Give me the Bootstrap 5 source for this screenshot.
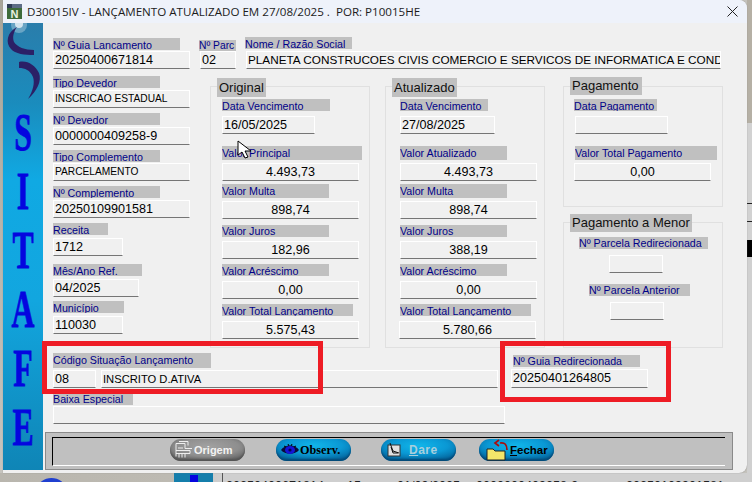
<!DOCTYPE html>
<html lang="pt-BR">
<head>
<meta charset="utf-8">
<title>D30015IV</title>
<link href="https://cdn.jsdelivr.net/npm/bootstrap@5.3.0/dist/css/bootstrap.min.css" rel="stylesheet">
<style>
html,body{margin:0;height:482px;width:752px;overflow:hidden;background:#c4c2bc;font-family:"Liberation Sans",Arial,sans-serif;color:#000}
.tira-e{width:3px;height:473px;background:linear-gradient(#a9a69a,#c6c4be)}
.tira-d{width:5px;height:473px;background:linear-gradient(#b5b0a5 0,#b5b0a5 123px,#d2d2d2 123px,#d2d2d2 203px,#222 203px,#222 204px,#d2d2d2 204px,#d2d2d2 221px,#222 221px,#222 222px,#d2d2d2 222px,#d2d2d2 240px,#000 240px,#000 257px,#d0d0d0 257px)}
.janela{width:744px;height:473px;background:#f0f0f0;border-radius:0 8px 8px 0;box-shadow:0 0 1px #777;position:relative;overflow:hidden}
.titulo{height:23px;background:#eef2fa;padding-left:4px;font:11.6px/23px "Open Sans",sans-serif;color:#1c1c1c;white-space:pre}
.ico-n{width:15px;height:15px;margin-right:5px;flex:none}
.fecha-x{margin-left:auto;margin-right:9px;width:11px;height:11px}
.corpo{height:447px}
.lateral{width:40px;height:447px;flex:none;background:linear-gradient(#2a7dab 0,#1a8cbd 18%,#10a9e3 35%,#12a6df 62%,#0f85b6 100%);overflow:hidden}
.lateral svg{display:block}
.letra{height:59px;text-align:center;font:bold 53px/59px "Liberation Serif",serif;color:#0505df;transform:scaleX(.6);-webkit-text-stroke:.8px #0505df}
.area{width:704px;padding-left:10px}
.linha1{padding-top:14px;height:46px}
.rot{display:block;background:#c0c0c0;color:#000088;font-size:10.7px;line-height:14px;height:12px;white-space:nowrap;overflow:hidden}
.cx{display:block;height:18px;background:#f0f0f0;border:1px solid #fff;border-bottom:1px solid #757575;font-size:12.6px;line-height:16px;padding-left:1px;white-space:nowrap;overflow:hidden}
.cx.vl{text-align:center;padding-left:0}
.menor{font-size:10.2px}
.medio{font-size:11.2px}
.a14 .rot{height:14px;line-height:14px}
.a15 .rot{height:15px;line-height:15px}
.v1 .rot{margin-bottom:1px}
.v2 .rot{margin-bottom:2px}
.v3 .rot{margin-bottom:3px}
.v4 .rot{margin-bottom:4px;line-height:12px}
.v5 .rot{margin-bottom:5px}
.t2{margin-top:2px}.t3{margin-top:3px}.t4{margin-top:4px}.t5{margin-top:5px}.t6{margin-top:6px}.t7{margin-top:7px}.t8{margin-top:8px}.t11{margin-top:11px}.t12{margin-top:12px}
.f-guia{width:137px}
.f-guia .rot{width:127px;margin:1px 0}
.f-parc{width:37px;margin-left:9px}
.f-parc .rot{margin-top:3px;height:11px;line-height:11px;font-size:10.3px}
.f-parc .cx{margin-left:1px;width:36px}
.f-nome{width:476px;margin-left:9px}
.f-nome .rot{width:107px;margin-bottom:2px}
.f-nome .cx{margin-left:1px;width:475px;font-size:11.75px;padding:0 1px}
.col-esq{width:157px;flex:none;margin-top:-10px}
.l137{width:137px}.l70{width:70px}.l86{width:86px}
.r55{width:55px}.r89{width:89px}.r71{width:71px}
.linha2{height:279px;padding-top:17px}
.grupo{border:1px solid #e0e0e0;width:160px;height:262px;padding-left:11px}
.g-atu{margin-left:15px;padding-left:14px}
.coluna3{margin-left:18px}
.legenda{display:block;width:fit-content;background:#c0c0c0;font-size:13px;line-height:19px;height:19px;margin:-9px 0 0 -5px;padding:0 2px;color:#111;white-space:nowrap}
.g-atu .legenda{margin-left:-8px}
.g-pag{height:121px;padding-left:10px}
.g-pag .legenda{height:18px;line-height:18px;margin:-10px 0 0 -4px;padding-right:3px}
.g-men{height:126px;margin-top:15px;padding-left:0}
.g-men .legenda{height:18px;line-height:18px;margin-left:6px}
.lb108{width:108px}.lb140{width:140px}.lb107{width:107px}.lb131{width:131px}
.lb88{width:88px}.lb83{width:83px}.lb142{width:142px}.lb158{width:158px}.lb80{width:80px}
.cx93{width:93px}.cx137{width:137px}.cx95{width:95px}
.la1{margin-left:15px;width:129px;line-height:12px}
.la2{margin-left:25px;width:101px;line-height:12px}
.bx54{width:54px;margin-left:45px}.bx54b{width:54px;margin-left:46px}
.desloca-1{margin-left:-1px}.desloca1{margin-left:1px}
.linha3{height:76px}
.sit{width:445px;padding-top:5px}
.c43{width:43px;flex:none}.cresto{width:397px;margin-left:5px}
.guia{margin-left:13px;padding-top:7px}
.guia .rot{width:127px;margin:0 0 2px 2px;line-height:12px}
.guia .cx{height:19px}
.baixa{width:452px;margin-top:5px}
.baixa .rot{width:80px;height:12px;line-height:12px;margin-bottom:1px}
.painel{width:688px;height:38px;margin:8px 0 0 -8px;background:#c0c0c0;border:1px solid #8a8a8a;padding:4px 7px 3px 6px}
.painel-in{height:29px;border-top:1px solid #000;border-left:1px solid #000;border-bottom:1px solid #fff;padding-top:1px}
.bt{width:75px;height:22px;border-radius:11px;border:0;padding:0 0 0 3px;display:flex;align-items:center;font-weight:bold;background:radial-gradient(ellipse 70% 70% at 50% 30%,#11b6ea 0,#0a98d4 55%,#04659c 100%);color:#000;box-shadow:inset 0 -2px 2px #034a78;line-height:1;font-size:12px}
.bt:hover,.bt:focus,.bt:active{color:#000}
.bt svg{flex:none}
.b-ori{margin-left:117px;background:radial-gradient(ellipse 70% 70% at 50% 35%,#a2a2a2 0,#8e8e8e 60%,#606060 100%);box-shadow:inset 0 -2px 2px #555;color:#f2f2f2;font:bold 11px "Liberation Sans",sans-serif;padding-left:2px}
.b-obs{margin-left:31px;font:bold 12.2px "Liberation Serif",serif;padding-left:4px}
.b-dar{margin-left:30px;color:#a9cfdc;font:bold 12px "Liberation Sans",sans-serif;letter-spacing:.5px;padding-left:6px}
.b-dar:hover{color:#a9cfdc}
.b-dar svg{margin-right:8px}
.b-fec{margin-left:23px;font:bold 11.5px "Liberation Sans",sans-serif;padding-left:7px}
.b-ori:hover,.b-ori:focus{color:#f2f2f2}
.sub{text-decoration:underline}
.caixa-v{position:absolute;border:5px solid #ee1c25;pointer-events:none}
.cv1{left:39px;top:341px;width:281px;height:53px}
.cv2{left:497px;top:341px;width:171px;height:61px}
.cursor{position:absolute;left:234px;top:140px;width:16px;height:20px}
.rodape{height:9px;overflow:hidden;background:linear-gradient(90deg,#b9b6ae 0,#bdbab2 170px,#cfcfcf 222px,#cfcfcf 100%)}
.bola{width:27px;height:20px;border-radius:50%;background:#1f3fd0;margin:5px 0 0 38px;flex:none}
.lat2{width:39px;height:9px;background:#147eab;margin-left:109px;flex:none}
.lat2 i{display:block;width:8px;height:9px;background:#0505df;margin:2px auto 0}
.grade{margin-left:9px;border-left:1px solid #555;padding-left:3px;font-size:12.6px;line-height:14px;padding-top:6px;white-space:nowrap;color:#222;height:9px}
.p1{width:121px}.p2{width:50px}.p3{width:79px}.p4{width:150px}
</style>
</head>
<body>
<div class="d-flex">
  <div class="tira-e"></div>
  <div class="janela">
    <div class="titulo d-flex align-items-center">
      <svg class="ico-n" viewBox="0 0 15 15"><rect width="15" height="15" fill="#3d6b3a"/><rect width="15" height="4" fill="#5d6d86"/><rect width="5" height="4" fill="#2f3c55"/><text x="7.5" y="14" text-anchor="middle" font-family="Liberation Sans" font-weight="bold" font-size="11" fill="#e9f1e0">N</text></svg>
      <span>D30015IV - LANÇAMENTO ATUALIZADO EM 27/08/2025 .  POR: P10015HE</span>
      <svg class="fecha-x" viewBox="0 0 11 11"><path d="M.5.5l10 10M10.5.5l-10 10" stroke="#222" stroke-width="1" fill="none"/></svg>
    </div>
    <div class="corpo d-flex">
      <div class="lateral">
        <svg width="40" height="80" viewBox="0 0 40 80">
          <circle cx="16" cy="2" r="8" fill="#fff" opacity=".3"/>
          <circle cx="16" cy="1" r="4" fill="#fff" opacity=".7"/>
          <path d="M14 4C4 9 2 20 8 26C12 31 22 32 31 32L31 27C22 27 14 24 11 19C9 14 11 8 14 4Z" fill="#2b2066"/>
          <path d="M16 39C24 37 32 42 36 50C39 58 34 68 25 76C30 68 32 60 30 54C27 47 22 45 16 45Z" fill="#2b2066"/>
        </svg>
        <div class="letra">S</div>
        <div class="letra">I</div>
        <div class="letra">T</div>
        <div class="letra">A</div>
        <div class="letra">F</div>
        <div class="letra">E</div>
      </div>
      <div class="area">
        <div class="linha1 d-flex align-items-start">
          <div class="f-guia"><span class="rot">Nº Guia Lancamento</span><span class="cx">20250400671814</span></div>
          <div class="f-parc"><span class="rot">Nº Parc</span><span class="cx">02</span></div>
          <div class="f-nome"><span class="rot">Nome / Razão Social</span><span class="cx">PLANETA CONSTRUCOES CIVIS COMERCIO E SERVICOS DE INFORMATICA E CONDOMINIOS</span></div>
        </div>
        <div class="linha2 d-flex">
          <div class="col-esq">
            <div class="v2 l137"><span class="rot lb107">Tipo Devedor</span><span class="cx menor">INSCRICAO ESTADUAL</span></div>
            <div class="v2 l137 t5"><span class="rot lb107">Nº Devedor</span><span class="cx">0000000409258-9</span></div>
            <div class="v1 l137 t5"><span class="rot lb107">Tipo Complemento</span><span class="cx menor">PARCELAMENTO</span></div>
            <div class="v2 l137 t5"><span class="rot lb107">Nº Complemento</span><span class="cx">20250109901581</span></div>
            <div class="v3 l70 t5"><span class="rot r55">Receita</span><span class="cx">1712</span></div>
            <div class="v3 l86 t8"><span class="rot r89">Mês/Ano Ref.</span><span class="cx">04/2025</span></div>
            <div class="v3 l70 t4"><span class="rot r71">Município</span><span class="cx">110030</span></div>
          </div>
          <div class="grupo">
            <span class="legenda">Original</span>
            <div class="v5 t2"><span class="rot lb108">Data Vencimento</span><span class="cx cx93">16/05/2025</span></div>
            <div class="v3 a14 t12"><span class="rot lb140">Valor Principal</span><span class="cx vl cx137">4.493,73</span></div>
            <div class="v3 a14 t3"><span class="rot lb107">Valor Multa</span><span class="cx vl cx137">898,74</span></div>
            <div class="v4 t6"><span class="rot lb107">Valor Juros</span><span class="cx vl cx137">182,96</span></div>
            <div class="v5 t5"><span class="rot lb107">Valor Acréscimo</span><span class="cx vl cx137">0,00</span></div>
            <div class="v5 t5"><span class="rot lb131">Valor Total Lançamento</span><span class="cx vl cx137">5.575,43</span></div>
          </div>
          <div class="grupo g-atu">
            <span class="legenda">Atualizado</span>
            <div class="v5 t2"><span class="rot lb88">Data Vencimento</span><span class="cx cx95">27/08/2025</span></div>
            <div class="v3 a14 t12"><span class="rot lb107">Valor Atualizado</span><span class="cx vl cx137">4.493,73</span></div>
            <div class="v3 a14 t3"><span class="rot lb107">Valor Multa</span><span class="cx vl cx137">898,74</span></div>
            <div class="v4 t6"><span class="rot lb107">Valor Juros</span><span class="cx vl cx137">388,19</span></div>
            <div class="v5 t5"><span class="rot lb107">Valor Acréscimo</span><span class="cx vl cx137">0,00</span></div>
            <div class="v5 t5"><span class="rot lb131">Valor Total Lançamento</span><span class="cx vl cx137 desloca-1">5.780,66</span></div>
          </div>
          <div class="coluna3">
            <div class="grupo g-pag">
              <span class="legenda">Pagamento</span>
              <div class="v5 t4"><span class="rot lb83">Data Pagamento</span><span class="cx cx93 desloca1"></span></div>
              <div class="v3 a14 t12"><span class="rot lb142 desloca1">Valor Total Pagamento</span><span class="cx vl cx137">0,00</span></div>
            </div>
            <div class="grupo g-men">
              <span class="legenda">Pagamento a Menor</span>
              <div class="t5"><span class="rot la1">Nº Parcela Redirecionada</span><span class="cx bx54 t6"></span></div>
              <div class="t11"><span class="rot la2">Nº Parcela Anterior</span><span class="cx bx54b t6"></span></div>
            </div>
          </div>
        </div>
        <div class="linha3 d-flex">
          <div class="sit a15 v2">
            <span class="rot lb158">Código Situação Lançamento</span>
            <div class="d-flex"><span class="cx c43">08</span><span class="cx cresto medio">INSCRITO D.ATIVA</span></div>
            <div class="baixa"><span class="rot">Baixa Especial</span><span class="cx"></span></div>
          </div>
          <div class="guia"><span class="rot">Nº Guia Redirecionada</span><span class="cx cx137">20250401264805</span></div>
        </div>
        <div class="painel">
          <div class="painel-in d-flex">
            <button type="button" class="btn bt b-ori"><svg width="22" height="20" viewBox="0 0 22 20" fill="none" stroke="#ededed" stroke-width="1"><path d="M4 3.5h9v5h7M4 3.5v13M7 1.5h9v4M4 10.5h14v3H4M7 13.5v4M10 13.5v4M13 13.5v4M6 8h5"/></svg>Origem</button>
            <button type="button" class="btn bt b-obs"><svg width="20" height="14" viewBox="0 0 20 14"><path d="M1 7C5 1 15 1 19 7 15 12 5 12 1 7z" fill="#0a0a3a"/><ellipse cx="10" cy="7" rx="5" ry="4" fill="#1414d8"/><circle cx="10" cy="7" r="1.6" fill="#050550"/><path d="M4 3l2 1M8 1l1 2M12 1l-1 2M16 3l-2 1" stroke="#000"/></svg>Observ.</button>
            <button type="button" class="btn bt b-dar"><svg width="14" height="14" viewBox="0 0 14 14"><rect x="1" y="2" width="12" height="11" fill="#e0e0e0" stroke="#333"/><path d="M3 0l3 8 6 2M4 4l2 6h5" fill="none" stroke="#111"/></svg><span><span class="sub">D</span>are</span></button>
            <button type="button" class="btn bt b-fec"><svg width="24" height="22" viewBox="0 0 24 22" fill="none"><path d="M1 10h6l2 2h10v9H1z" fill="#f4e66a" stroke="#222"/><path d="M21 11c0-5-2-8-7-7M13 1L9 4l4 3" stroke="#a80d0d" stroke-width="1.7"/></svg><span><span class="sub">F</span>echar</span></button>
          </div>
        </div>
      </div>
    </div>
    <div class="caixa-v cv1"></div>
    <div class="caixa-v cv2"></div>
    <svg class="cursor" viewBox="0 0 16 20"><path d="M1 1v14l4-3 3 6 3-1-3-6h6z" fill="#fff" stroke="#000"/></svg>
  </div>
  <div class="tira-d"></div>
</div>
<div class="rodape d-flex">
  <div class="bola"></div>
  <div class="lat2"><i></i></div>
  <div class="grade d-flex"><span class="p1">20250400671814</span><span class="p2">15</span><span class="p3">01/09/2025</span><span class="p4">0000000409258-9</span><span>20250109901581</span></div>
</div>
<script src="https://cdn.jsdelivr.net/npm/bootstrap@5.3.0/dist/js/bootstrap.bundle.min.js"></script>
</body>
</html>
